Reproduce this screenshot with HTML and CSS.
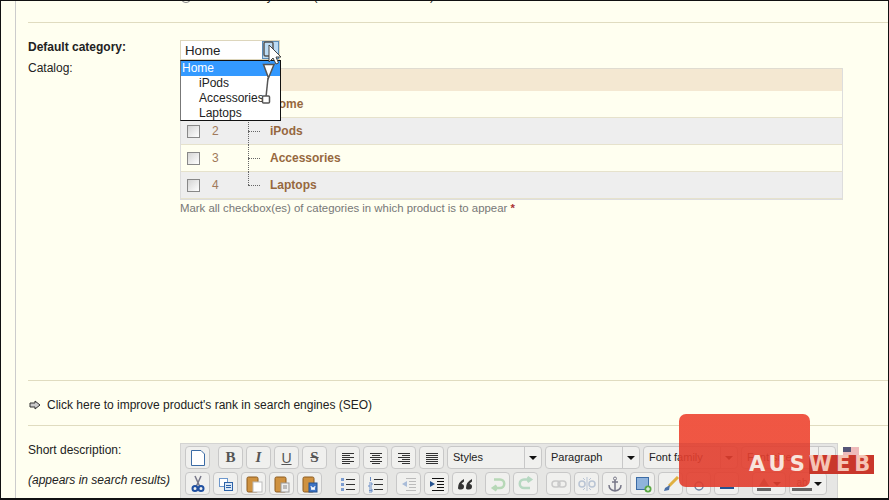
FILE: index.html
```html
<!DOCTYPE html>
<html>
<head>
  <link rel="stylesheet" href="styles.css">
</head>
<body>
  <div class="page">
    <div class="top-clip">
      <span class="radio"></span>
      <span class="clipped-text">Default: Deny orders (as set in Preferences)</span>
    </div>
    <hr class="rule">

    <div class="form-row category-row">
      <label class="label strong">Default category:</label>
      <div class="select-box">
        <span>Home</span>
        <span class="select-btn"></span>
      </div>
    </div>

    <div class="form-row catalog-row">
      <label class="label">Catalog:</label>
      <div class="catalog">
        <div class="cat-table">
          <div class="cat-head"></div>
          <div class="cat-row">
            <span class="check"></span><span class="num">1</span><span class="tree"></span><span class="cat-name">Home</span>
          </div>
          <div class="cat-row alt">
            <span class="check"></span><span class="num">2</span><span class="tree"></span><span class="cat-name">iPods</span>
          </div>
          <div class="cat-row">
            <span class="check"></span><span class="num">3</span><span class="tree"></span><span class="cat-name">Accessories</span>
          </div>
          <div class="cat-row alt">
            <span class="check"></span><span class="num">4</span><span class="tree last"></span><span class="cat-name">Laptops</span>
          </div>
        </div>
        <p class="hint">Mark all checkbox(es) of categories in which product is to appear <b>*</b></p>

        <ul class="dropdown">
          <li class="selected">Home</li>
          <li>iPods</li>
          <li>Accessories</li>
          <li>Laptops</li>
        </ul>
        <svg class="pointer" width="24" height="72" viewBox="0 0 24 72">
          <rect x="6" y="2" width="9" height="14" rx="1.500" fill="none" stroke="#555" stroke-width="1.500"/>
          <path d="M5.500 24.500 L16 24.500 L10.500 38 Z" fill="#fff" stroke="#555" stroke-width="1.500"/>
          <path d="M10 38 L8 57" stroke="#555" stroke-width="1.500"/>
          <rect x="4.500" y="56" width="7" height="7" rx="1" fill="#fff" stroke="#555" stroke-width="1.500"/>
          <path d="M11 5 L11 22 L15 18 L18 24 L20.500 23 L18 17 L23 17 Z" fill="#fff" stroke="#444"/>
        </svg>
      </div>
    </div>

    <hr class="rule seo-rule">
    <div class="seo-link">
      <svg width="12" height="10" viewBox="0 0 12 10"><path d="M1 3 H6 V1 L11 5 L6 9 V7 H1 Z" fill="#ccc" stroke="#333"/></svg>
      <span>Click here to improve product's rank in search engines (SEO)</span>
    </div>
    <hr class="rule short-rule">

    <div class="form-row short-row">
      <div class="short-labels">
        <label class="label">Short description:</label>
        <label class="label note">(appears in search results)</label>
      </div>
      <div class="editor">
        <div class="tool-row">
          <span class="btn"><svg width="18" height="18" viewBox="0 0 18 18"><path d="M2.500 1.500 H12 L15.500 5 V16.500 H2.500 Z" fill="#fff" stroke="#3b6ba5"/></svg></span>
          <span class="gap"></span>
          <span class="btn glyph serif">B</span>
          <span class="btn glyph serif italic">I</span>
          <span class="btn glyph under">U</span>
          <span class="btn glyph serif strike">S</span>
          <span class="gap"></span>
          <span class="btn"><svg width="16" height="14" viewBox="0 0 16 14"><path d="M2 2.500 H14 M2 4.500 H10 M2 6.500 H14 M2 8.500 H10 M2 10.500 H14 M2 12.500 H10" stroke="#333"/></svg></span>
          <span class="btn"><svg width="16" height="14" viewBox="0 0 16 14"><path d="M2 2.500 H14 M4 4.500 H12 M2 6.500 H14 M4 8.500 H12 M2 10.500 H14 M4 12.500 H12" stroke="#333"/></svg></span>
          <span class="btn"><svg width="16" height="14" viewBox="0 0 16 14"><path d="M2 2.500 H14 M6 4.500 H14 M2 6.500 H14 M6 8.500 H14 M2 10.500 H14 M6 12.500 H14" stroke="#333"/></svg></span>
          <span class="btn"><svg width="16" height="14" viewBox="0 0 16 14"><path d="M2 2.500 H14 M2 4.500 H14 M2 6.500 H14 M2 8.500 H14 M2 10.500 H14 M2 12.500 H14" stroke="#333"/></svg></span>
          <span class="combo">Styles<i class="arrow"></i></span>
          <span class="combo">Paragraph<i class="arrow"></i></span>
          <span class="combo">Font family<i class="arrow"></i></span>
          <span class="combo">Font size<i class="arrow"></i></span>
        </div>
        <div class="tool-row">
          <span class="btn"><svg width="18" height="18" viewBox="0 0 18 18"><path d="M6 1 L10.500 11 M12 1 L7.500 11" stroke="#778" stroke-width="1.500"/><circle cx="6" cy="13.500" r="2.500" fill="none" stroke="#1f4fa0" stroke-width="2"/><circle cx="12" cy="13.500" r="2.500" fill="none" stroke="#1f4fa0" stroke-width="2"/></svg></span>
          <span class="btn"><svg width="18" height="18" viewBox="0 0 18 18"><rect x="2.500" y="3.500" width="8" height="8" fill="#fff" stroke="#6d97cc"/><rect x="7.500" y="7.500" width="8" height="8" fill="#dbe8f7" stroke="#2c62a8"/><path d="M9 10.500 H14 M9 12.500 H14" stroke="#2c62a8"/></svg></span>
          <span class="btn"><svg width="18" height="18" viewBox="0 0 18 18"><rect x="2" y="2" width="11" height="15" rx="1.500" fill="#cf9240" stroke="#8c5a1e"/><rect x="8" y="7" width="9" height="10" fill="#fff" stroke="#bbb"/></svg></span>
          <span class="btn"><svg width="18" height="18" viewBox="0 0 18 18"><rect x="2" y="2" width="11" height="15" rx="1.500" fill="#cf9240" stroke="#8c5a1e"/><rect x="8" y="8" width="8" height="9" fill="#eee" stroke="#999"/><path d="M10 11 H14 M10 13 H14" stroke="#888"/></svg></span>
          <span class="btn"><svg width="18" height="18" viewBox="0 0 18 18"><rect x="2" y="2" width="11" height="15" rx="1.500" fill="#cf9240" stroke="#8c5a1e"/><rect x="8" y="8" width="8" height="9" fill="#3f74c4" stroke="#24528f"/><path d="M10 11 L11 15 L12 12 L13 15 L14 11" stroke="#fff" fill="none"/></svg></span>
          <span class="gap wide"></span>
          <span class="btn"><svg width="18" height="18" viewBox="0 0 18 18"><path d="M7 4.500 H16 M7 9.500 H16 M7 14.500 H16" stroke="#333"/><rect x="2" y="3" width="3" height="3" fill="#7d9dd0"/><rect x="2" y="8" width="3" height="3" fill="#7d9dd0"/><rect x="2" y="13" width="3" height="3" fill="#7d9dd0"/></svg></span>
          <span class="btn"><svg width="18" height="18" viewBox="0 0 18 18"><path d="M7 4.500 H16 M7 9.500 H16 M7 14.500 H16" stroke="#333"/><path d="M3.500 2 V6 M2 8 H5 V10 H2 V12 H5 M2 14 H5 V17 H2 M2 15.500 H5" stroke="#6c8fc7" fill="none"/></svg></span>
          <span class="gap"></span>
          <span class="btn"><svg width="18" height="18" viewBox="0 0 18 18"><path d="M6 3.500 H16 M9 6.500 H16 M9 9.500 H16 M9 12.500 H16 M6 15.500 H16" stroke="#bbb"/><path d="M7 6 L2 9 L7 12 Z" fill="#a9bcd8"/></svg></span>
          <span class="btn"><svg width="18" height="18" viewBox="0 0 18 18"><path d="M4 3.500 H16 M9 6.500 H16 M9 9.500 H16 M9 12.500 H16 M4 15.500 H16" stroke="#111"/><path d="M2 6 L7 9 L2 12 Z" fill="#24528f"/></svg></span>
          <span class="btn"><svg width="18" height="18" viewBox="0 0 18 18"><path d="M2 13 Q2 7 8 4 L8 6.500 Q5.500 8 5.500 9 Q8 9 8 11.500 Q8 14.500 5 14.500 Q2 14.500 2 13 Z M10 13 Q10 7 16 4 L16 6.500 Q13.500 8 13.500 9 Q16 9 16 11.500 Q16 14.500 13 14.500 Q10 14.500 10 13 Z" fill="#333"/></svg></span>
          <span class="gap"></span>
          <span class="btn"><svg width="18" height="18" viewBox="0 0 18 18"><path d="M5 4.500 H11 A4 4 0 0 1 11 13 H5 M7.500 10.500 L4 13 L7.500 15.500" fill="none" stroke="#b7d8b7" stroke-width="2.500"/></svg></span>
          <span class="btn"><svg width="18" height="18" viewBox="0 0 18 18"><path d="M13 13 H7 A4 4 0 0 1 7 4.500 H13 M10.500 2 L14 4.500 L10.500 7" fill="none" stroke="#b7d8c2" stroke-width="2.500"/></svg></span>
          <span class="gap"></span>
          <span class="btn"><svg width="18" height="18" viewBox="0 0 18 18"><rect x="2" y="6" width="8" height="6" rx="3" fill="none" stroke="#c9c9c9" stroke-width="1.500"/><rect x="8" y="6" width="8" height="6" rx="3" fill="none" stroke="#c9c9c9" stroke-width="1.500"/></svg></span>
          <span class="btn"><svg width="18" height="18" viewBox="0 0 18 18"><rect x="1" y="6" width="6" height="6" rx="3" fill="none" stroke="#b9c4d4" stroke-width="1.500"/><rect x="11" y="6" width="6" height="6" rx="3" fill="none" stroke="#b9c4d4" stroke-width="1.500"/><path d="M9 2 V16 M5 3 L7 5 M13 3 L11 5 M5 15 L7 13 M13 15 L11 13" stroke="#b9c4d4"/></svg></span>
          <span class="btn"><svg width="18" height="18" viewBox="0 0 18 18"><circle cx="9" cy="3.500" r="1.500" fill="none" stroke="#778"/><path d="M9 5 V16 M6 7 H12 M3 10 Q3 15 9 16 Q15 15 15 10" fill="none" stroke="#778" stroke-width="1.500"/></svg></span>
          <span class="btn"><svg width="18" height="18" viewBox="0 0 18 18"><rect x="2.500" y="2.500" width="12" height="12" fill="#8fb3dc" stroke="#3b6ba5"/><circle cx="14" cy="14" r="3.500" fill="#5aa845"/><path d="M12 14 H16 M14 12 V16" stroke="#fff"/></svg></span>
          <span class="btn"><svg width="18" height="18" viewBox="0 0 18 18"><path d="M16 2 L7 11" stroke="#e0b040" stroke-width="3"/><path d="M8 10 L3 13 L2 16 L7 15 Z" fill="#4a6fa5"/></svg></span>
          <span class="btn"><svg width="18" height="18" viewBox="0 0 18 18"><circle cx="9" cy="11" r="4" fill="none" stroke="#6a7fa0" stroke-width="1.500"/></svg></span>
          <span class="btn"><svg width="18" height="18" viewBox="0 0 18 18"><rect x="2" y="12" width="14" height="2" fill="#24528f"/></svg></span>
          <span class="gap wide"></span>
          <span class="combo-btn"><svg width="18" height="18" viewBox="0 0 18 18"><path d="M9 3 L4 11 H14 Z" fill="#777"/><rect x="2" y="13" width="14" height="3" fill="#666"/></svg><i class="arrow"></i></span>
          <span class="combo-btn back">
            <span class="ab">ab</span>
            <i class="arrow"></i>
          </span>
        </div>
        <div class="tool-row">
          <span class="btn"></span><span class="btn"></span><span class="btn"></span><span class="btn"></span>
          <span class="gap"></span>
          <span class="btn"></span><span class="btn"></span><span class="btn"></span><span class="btn"></span>
        </div>
      </div>
      <svg class="flag" width="16" height="10" viewBox="0 0 16 10"><rect width="16" height="10" fill="#fff"/><path d="M0 1 H16 M0 3 H16 M0 5 H16 M0 7 H16 M0 9 H16" stroke="#d77"/><rect width="8" height="5" fill="#557"/></svg>
    </div>
  </div>

  <div class="watermark">
    <div class="wm-box"></div>
    <div class="wm-text">AUS<span class="wm-web">WEB</span></div>
  </div>
</body>
</html>
```

FILE: styles.css
```css
* {
  margin: 0;
  padding: 0;
  box-sizing: border-box;
  font-family: 'Liberation Sans', Arial, sans-serif;
}

html, body {
  height: 500px;
  overflow: hidden;
}

body {
  background: #fffff0;
  border-left: 1px solid #111;
  border-right: 1px solid #111;
  border-top: 1px solid #111;
  border-bottom: 2px solid #111;
  padding-left: 14px;
  position: relative;
}

/* Main panel */
.page {
  height: 497px;
  background: #fffff0;
  border-left: 1px solid #ccc;
  padding-left: 12px;
  overflow: hidden;
  font-size: 12px;
  color: #333;
}

.top-clip {
  height: 32px;
  margin-top: -11px;
  padding-left: 152px;
  display: flex;
  gap: 8px;
}

.radio {
  width: 12px;
  height: 13px;
  border: 1px solid #888;
  border-radius: 50%;
  flex: none;
}

.clipped-text {
  font-size: 12px;
  line-height: 12px;
  color: #222;
}

.rule {
  border: 0;
  border-top: 1px solid #e0dcc0;
  height: 0;
}

.form-row {
  display: flex;
}

.label {
  display: block;
  width: 152px;
  flex: none;
  font-size: 12px;
  line-height: 14px;
  color: #222;
}

.strong {
  font-weight: bold;
}

.category-row {
  margin-top: 17px;
}

.select-box {
  width: 100px;
  height: 20px;
  background: #fff;
  border: 1px solid #ddd6bc;
  font-size: 13.300px;
  line-height: 19px;
  padding-left: 4px;
  color: #222;
  position: relative;
}

.select-btn {
  position: absolute;
  right: 0;
  top: 0;
  width: 17px;
  height: 18px;
  background: #bcdcf4;
  border: 1px solid #5b8db8;
}

.catalog-row .label {
  padding-top: 1px;
}

.catalog {
  position: relative;
  margin-top: 8px;
  width: 663px;
}

.cat-table {
  border: 1px solid #ddd;
  border-top: 0;
}

.cat-head {
  height: 23px;
  background: #f4e8d2;
  border-top: 1px solid #e0dcd0;
}

.cat-row {
  height: 27px;
  display: flex;
  align-items: center;
  border-bottom: 1px solid #e6e2cc;
  padding-left: 6px;
  position: relative;
}

.cat-row.alt {
  background: #eeeeee;
}

.check {
  width: 13px;
  height: 13px;
  border: 1px solid #888;
  background: linear-gradient(135deg, #d4d4d4, #fff);
  flex: none;
}

.num {
  width: 48px;
  padding-left: 12px;
  color: #a0795a;
  font-size: 12px;
  flex: none;
}

.tree {
  width: 14px;
  height: 27px;
  flex: none;
  position: relative;
  margin-right: 8px;
}

.tree::before {
  content: '';
  position: absolute;
  left: 0;
  top: 0;
  height: 100%;
  border-left: 1px dotted #666;
}

.tree.last::before {
  height: 50%;
}

.tree::after {
  content: '';
  position: absolute;
  left: 0;
  top: 50%;
  width: 12px;
  border-top: 1px dotted #666;
}

.cat-name {
  font-weight: bold;
  color: #96683e;
  font-size: 12px;
}

.hint {
  font-size: 11.400px;
  color: #777;
  margin-top: 2px;
}

.hint b {
  color: #a33;
}

/* Open select list */
.dropdown {
  position: absolute;
  left: 0;
  top: -8px;
  width: 101px;
  height: 61px;
  background: #fff;
  border: 1px solid #111;
  border-left-color: #777;
  list-style: none;
  font-size: 12px;
  line-height: 15px;
  color: #222;
}

.dropdown li {
  padding-left: 18px;
}

.dropdown li.selected {
  background: #3399ff;
  color: #fff;
  padding-left: 1px;
}

.pointer {
  position: absolute;
  left: 78px;
  top: -28px;
}

.seo-rule {
  margin-top: 166px;
}

.seo-link {
  display: flex;
  align-items: center;
  gap: 6px;
  height: 44px;
  padding-left: 1px;
  padding-top: 3px;
  font-size: 12px;
  color: #222;
}

.short-row {
  margin-top: 17px;
}

.short-labels {
  width: 152px;
  flex: none;
}

.note {
  font-style: italic;
  margin-top: 16px;
}

/* Editor toolbar */
.editor {
  width: 658px;
  height: 70px;
  background: #e6e6e4;
  border: 1px solid #d4d4d2;
  padding: 2px 0 0 4px;
  flex: none;
}

.tool-row {
  display: flex;
  gap: 3px;
  height: 23px;
  margin-bottom: 3px;
}

.gap {
  width: 2px;
  flex: none;
}

.gap.wide {
  width: 7px;
}

.btn {
  width: 25px;
  height: 23px;
  flex: none;
  border: 1px solid #c8c8c8;
  border-radius: 4px;
  background: #f0f0ee;
  display: flex;
  align-items: center;
  justify-content: center;
}

.glyph {
  font-size: 14px;
  color: #555;
}

.serif {
  font-family: 'Liberation Serif', serif;
  font-weight: bold;
  font-size: 15px;
}

.italic {
  font-style: italic;
}

.under {
  text-decoration: underline;
}

.strike {
  text-decoration: line-through;
}

.combo {
  height: 23px;
  width: 95px;
  flex: none;
  border: 1px solid #c8c8c8;
  border-radius: 4px;
  background: #f0f0ee;
  font-size: 11px;
  line-height: 21px;
  padding-left: 5px;
  color: #222;
  position: relative;
}

.combo::before {
  content: '';
  position: absolute;
  right: 16px;
  top: 0;
  height: 100%;
  border-left: 1px solid #c8c8c8;
}

.combo-btn {
  width: 34px;
  height: 23px;
  flex: none;
  border: 1px solid #c8c8c8;
  border-radius: 4px;
  background: #f0f0ee;
  display: flex;
  align-items: center;
  padding-left: 2px;
  position: relative;
}

.combo-btn.back {
  width: 38px;
}

.ab {
  font-size: 10px;
  color: #555;
  border-bottom: 3px solid #666;
  width: 20px;
  text-align: center;
  line-height: 11px;
}

.arrow {
  position: absolute;
  right: 4px;
  top: 9px;
  border-left: 4px solid transparent;
  border-right: 4px solid transparent;
  border-top: 4px solid #111;
}

.flag {
  margin: 4px 0 0 5px;
  flex: none;
}

/* Watermark */
.watermark {
  position: absolute;
  left: 678px;
  top: 413px;
}

.wm-box {
  width: 131px;
  height: 73px;
  background: linear-gradient(rgba(239, 83, 64, 0.98) 40%, rgba(226, 62, 46, 0.9) 40%);
  border-radius: 7px;
}

.wm-text {
  position: absolute;
  left: 70px;
  top: 41px;
  height: 19px;
  font-family: 'DejaVu Sans', sans-serif;
  font-size: 21px;
  line-height: 19px;
  font-weight: bold;
  letter-spacing: 4px;
  color: #f8e4dc;
  white-space: nowrap;
}

.wm-web {
  font-family: 'DejaVu Sans', sans-serif;
  display: inline-block;
  background: #c9372b;
  color: #f5c4b6;
  height: 19px;
}
```
